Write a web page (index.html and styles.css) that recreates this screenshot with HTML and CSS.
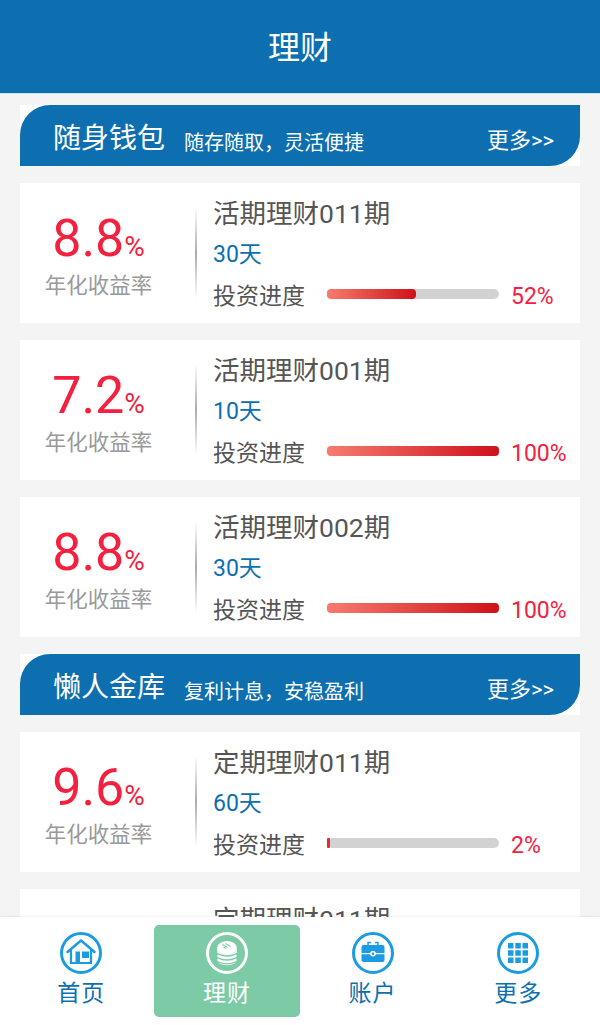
FILE: index.html
```html
<!DOCTYPE html>
<html lang="zh-CN">
<head>
<meta charset="UTF-8" />
<meta name="viewport" content="width=device-width, initial-scale=1" />
<title>理财</title>
<link rel="stylesheet" href="styles.css">
</head>
<body>

<header class="top-bar">理财</header>

<main class="content">
  <div class="section-head">
    <div class="section-inner">
      <span class="section-name">随身钱包</span>
      <span class="section-desc">随存随取<span class="comma">，</span>灵活便捷</span>
      <span class="section-more">更多&gt;&gt;</span>
    </div>
  </div>

  <div class="card">
    <div class="rate">
      <div class="rate-num">8.8<span class="rate-unit">%</span></div>
      <div class="rate-label">年化收益率</div>
    </div>
    <div class="info">
      <div class="info-name">活期理财011期</div>
      <div class="info-days">30天</div>
      <div class="progress-row">
        <span class="progress-label">投资进度</span>
        <div class="bar"><div class="bar-fill" style="width: 52%"></div></div>
        <span class="progress-num">52%</span>
      </div>
    </div>
  </div>

  <div class="card">
    <div class="rate">
      <div class="rate-num">7.2<span class="rate-unit">%</span></div>
      <div class="rate-label">年化收益率</div>
    </div>
    <div class="info">
      <div class="info-name">活期理财001期</div>
      <div class="info-days">10天</div>
      <div class="progress-row">
        <span class="progress-label">投资进度</span>
        <div class="bar"><div class="bar-fill" style="width: 100%"></div></div>
        <span class="progress-num">100%</span>
      </div>
    </div>
  </div>

  <div class="card">
    <div class="rate">
      <div class="rate-num">8.8<span class="rate-unit">%</span></div>
      <div class="rate-label">年化收益率</div>
    </div>
    <div class="info">
      <div class="info-name">活期理财002期</div>
      <div class="info-days">30天</div>
      <div class="progress-row">
        <span class="progress-label">投资进度</span>
        <div class="bar"><div class="bar-fill" style="width: 100%"></div></div>
        <span class="progress-num">100%</span>
      </div>
    </div>
  </div>

  <div class="section-head">
    <div class="section-inner">
      <span class="section-name">懒人金库</span>
      <span class="section-desc">复利计息<span class="comma">，</span>安稳盈利</span>
      <span class="section-more">更多&gt;&gt;</span>
    </div>
  </div>

  <div class="card">
    <div class="rate">
      <div class="rate-num">9.6<span class="rate-unit">%</span></div>
      <div class="rate-label">年化收益率</div>
    </div>
    <div class="info">
      <div class="info-name">定期理财011期</div>
      <div class="info-days">60天</div>
      <div class="progress-row">
        <span class="progress-label">投资进度</span>
        <div class="bar"><div class="bar-fill bar-fill-low" style="width: 2%"></div></div>
        <span class="progress-num">2%</span>
      </div>
    </div>
  </div>

  <div class="card card-peek">
    <div class="info">
      <div class="info-name">定期理财011期</div>
    </div>
  </div>
</main>

<nav class="tabs">
  <div class="tab">
    <svg class="tab-icon" viewBox="0 0 42 42">
      <circle cx="21" cy="21" r="19.5" fill="none" stroke="#1b9ce2" stroke-width="3"/>
      <path d="M7.500 20 L21 8.500 L34.500 20" fill="none" stroke="#1b9ce2" stroke-width="2.500" stroke-linecap="round" stroke-linejoin="round"/>
      <path d="M11 18 V31 H31 V18" fill="none" stroke="#1b9ce2" stroke-width="2.200"/>
      <rect x="15.500" y="19.500" width="4.500" height="11" fill="#1b9ce2"/>
      <rect x="22" y="19.500" width="7" height="6.500" fill="#1b9ce2"/>
    </svg>
    <span>首页</span>
  </div>
  <div class="tab tab-active">
    <svg class="tab-icon" viewBox="0 0 42 42">
      <circle cx="21" cy="21" r="19.5" fill="none" stroke="#fff" stroke-width="3"/>
      <path d="M11.500 22.500 Q21 27 30.500 22.500 V25 Q21 29.500 11.500 25 Z" fill="#fff"/>
      <path d="M11.500 26.500 Q21 31 30.500 26.500 V29 Q21 33.500 11.500 29 Z" fill="#fff"/>
      <path d="M12.500 30.500 Q21 34.500 29.500 30.500 V31 Q21 35.500 12.500 31 Z" fill="#fff"/>
      <ellipse cx="21" cy="15.500" rx="9.800" ry="6.500" fill="#fff"/>
      <path d="M11.200 16 V21 Q21 25.500 30.800 21 V16 Q21 24 11.200 16 Z" fill="#fff" fill-opacity="0.85"/>
      <path d="M16.500 12.500 L21.500 15.500 M19.500 11.500 L24.500 14.500 M17.500 15 L20 16.500" stroke="#7ccba6" stroke-width="1.200" fill="none"/>
    </svg>
    <span>理财</span>
  </div>
  <div class="tab">
    <svg class="tab-icon" viewBox="0 0 42 42">
      <circle cx="21" cy="21" r="19.5" fill="none" stroke="#1b9ce2" stroke-width="3"/>
      <path d="M16 13 V10.500 H19 M26 13 V10.500 H23" fill="none" stroke="#1b9ce2" stroke-width="1.400"/>
      <path d="M11.500 13 H30.500 Q32.500 13 32.500 15 V21 H24 Q23.500 19 21 19 Q18.500 19 18 21 H9.500 V15 Q9.500 13 11.500 13 Z" fill="#1b9ce2"/>
      <path d="M9.500 22.200 H18 Q18.500 24.500 21 24.500 Q23.500 24.500 24 22.200 H32.500 V28 Q32.500 30 30.500 30 H11.500 Q9.500 30 9.500 28 Z" fill="#1b9ce2"/>
      <circle cx="21" cy="21.700" r="1.200" fill="#1b9ce2"/>
    </svg>
    <span>账户</span>
  </div>
  <div class="tab">
    <svg class="tab-icon" viewBox="0 0 42 42">
      <circle cx="21" cy="21" r="19.5" fill="none" stroke="#1b9ce2" stroke-width="3"/>
      <path d="M11 11 H16.500 V16.500 H11 Z M18.300 11 H23.800 V16.500 H18.300 Z M25.500 11 H31 V16.500 H25.500 Z M11 18.300 H16.500 V23.800 H11 Z M18.300 18.300 H23.800 V23.800 H18.300 Z M25.500 18.300 H31 V23.800 H25.500 Z M11 25.500 H16.500 V31 H11 Z M18.300 25.500 H23.800 V31 H18.300 Z M25.500 25.500 H31 V31 H25.500 Z" fill="#1b9ce2"/>
    </svg>
    <span>更多</span>
  </div>
</nav>

</body>
</html>
```

FILE: styles.css
```css
* {
  box-sizing: border-box;
}
body {
  margin: 0;
  height: 100vh;
  overflow: hidden;
  display: flex;
  flex-direction: column;
  background-color: #f4f4f4;
  font-family: Roboto, "Noto Sans CJK SC", sans-serif;
  color: #555;
}
.top-bar {
  flex: none;
  height: 94px;
  background: #0d6fb0;
  border-bottom: 1px solid #cfe3f1;
  color: #fff;
  font-size: 32px;
  line-height: 96px;
  text-align: center;
}
.content {
  flex: 1;
  min-height: 0;
  overflow: hidden;
  padding: 11px 20px 0;
  display: flex;
  flex-direction: column;
  gap: 17px;
}
.section-head {
  flex: none;
  height: 61px;
  background: #fff;
}
.section-inner {
  height: 100%;
  padding: 0 26px 0 33px;
  display: flex;
  align-items: center;
  background: #0d6fb0;
  border-radius: 30px 0 30px 0;
  color: #fff;
}
.section-name {
  font-size: 28px;
  margin-right: 19px;
}
.section-desc {
  flex: 1;
  font-size: 20px;
  padding-top: 12px;
}
.comma {
  font-family: "Noto Sans CJK TC", sans-serif;
}
.section-more {
  font-size: 22px;
  padding-top: 4px;
}
.card {
  flex: none;
  height: 140px;
  display: flex;
  align-items: center;
  background: #fff;
}
.card-peek {
  padding-left: 175px;
}
.rate {
  width: 157px;
  margin-right: 18px;
  flex: none;
  text-align: center;
}
.rate-num {
  color: #f3213f;
  font-size: 52px;
  line-height: 68px;
}
.rate-unit {
  font-size: 28px;
}
.rate-label {
  color: #999;
  font-size: 21.500px;
  line-height: 30px;
  margin-top: -10px;
}
.info {
  flex: 1;
  height: 140px;
  padding: 11px 12px 0 18px;
  position: relative;
}
.info::before {
  content: "";
  position: absolute;
  left: 0;
  top: 24px;
  bottom: 24px;
  width: 1.500px;
  background: linear-gradient(180deg, #fff, #aaa 50%, #fff);
}
.card-peek .info::before {
  display: none;
}
.info-name {
  font-size: 26.500px;
  line-height: 40px;
}
.info-days {
  color: #0d6fb0;
  font-size: 23px;
  line-height: 38px;
  margin-top: 2px;
}
.progress-row {
  display: flex;
  align-items: center;
  height: 38px;
  margin-top: 1px;
}
.progress-label {
  width: 114px;
  flex: none;
  font-size: 23px;
}
.bar {
  width: 172px;
  flex: none;
  height: 10px;
  background: #d2d2d2;
  border-radius: 5px;
}
.bar-fill {
  height: 100%;
  border-radius: 4px;
  background: linear-gradient(90deg, #f67c6e, #cf1119);
}
.bar-fill-low {
  border-radius: 1px;
  background: #dd2c30;
}
.progress-num {
  margin-left: 12px;
  padding-top: 4px;
  color: #f3213f;
  font-size: 23px;
}
.tabs {
  flex: none;
  height: 108px;
  padding: 8px 9px 8px 8.500px;
  display: flex;
  background: #fff;
  box-shadow: 0 -1px 2px rgba(0, 0, 0, 0.06);
}
.tab {
  flex: 1;
  display: flex;
  flex-direction: column;
  align-items: center;
  padding-top: 7px;
  border-radius: 5px;
  color: #0d6fb0;
  font-size: 23px;
  line-height: 30px;
}
.tab span {
  margin-top: 5px;
  letter-spacing: 1px;
}
.tab-active {
  background: #7ccba6;
  color: #fff;
}
.tab-icon {
  width: 42px;
  height: 42px;
  display: block;
}
```
